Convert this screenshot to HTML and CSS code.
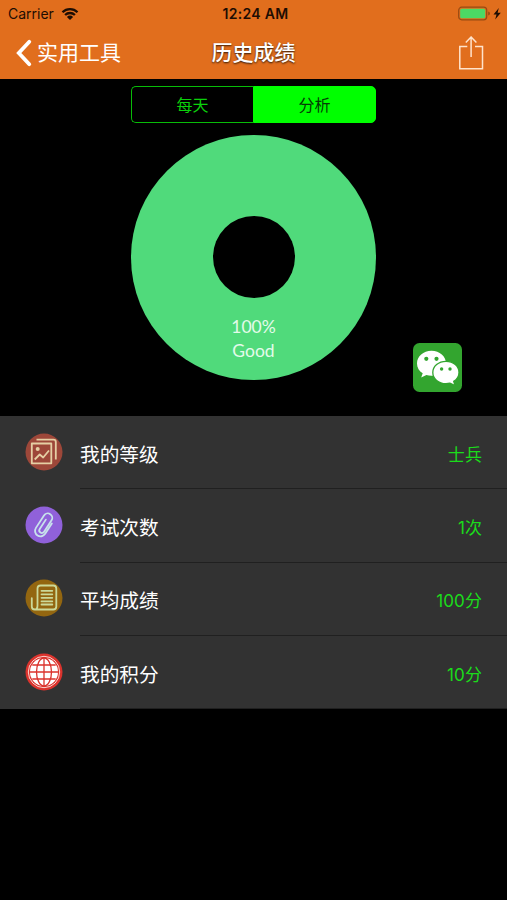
FILE: index.html
```html
<!DOCTYPE html>
<html lang="zh-CN">
<head>
<meta charset="utf-8">
<title>历史成绩</title>
<link rel="stylesheet" href="styles.css">
</head>
<body>

<div class="header">
<div class="status">
<div class="carrier">
<span>Carrier</span>
<svg width="18" height="14" viewBox="0 0 18 14">
<path d="M1.500 5.200a10.600 10.600 0 0 1 15 0M4.100 8a7 7 0 0 1 9.800 0" fill="none" stroke="#1d0d03" stroke-width="2.300"/>
<path d="M5.900 9.900a4.400 4.400 0 0 1 6.200 0L9 13z" fill="#1d0d03"/>
</svg>
</div>
<div class="clock">12:24 AM</div>
<div class="power">
<svg width="45" height="16" viewBox="0 0 45 16">
<rect x="0.700" y="1.200" width="28" height="12.600" rx="3" fill="none" stroke="#974b13" stroke-width="1.200"/>
<rect x="2.200" y="2.700" width="25" height="9.600" rx="1.500" fill="#4cd964"/>
<path d="M30.200 5.500v4q1.800-.6 1.800-2t-1.800-2z" fill="#974b13"/>
<path d="M40.800 2L35.500 8.500h3l-1.300 5 5.600-6.800h-3.200z" fill="#1d0d03"/>
</svg>
</div>
</div>
<div class="nav">
<a class="back" href="#">
<svg width="16" height="28" viewBox="0 0 16 28">
<path d="M13.300 2.800L2.800 14l10.500 11.200" fill="none" stroke="#fff" stroke-width="3.800" stroke-linecap="round"/>
</svg>
<span>实用工具</span>
</a>
<div class="title">历史成绩</div>
<a class="share" href="#">
<svg width="26" height="35" viewBox="0 0 26 35">
<path d="M9.300 10.500H1.800v22.200h22.700V10.500H17M13.100 21V1.300M7.800 6.500l5.300-5.500L18.400 6.500" fill="none" stroke="#ffe3cc" stroke-width="1.500"/>
</svg>
</a>
</div>
</div>

<div class="analysis">
<div class="tabs">
<a class="tab" href="#">每天</a>
<a class="tab active" href="#">分析</a>
</div>
<div class="chart">
<div class="hole"></div>
<div class="label">100%<br>Good</div>
</div>
<a class="wechat" href="#">
<svg width="49" height="49" viewBox="0 0 49 49">
<rect width="49" height="49" rx="6.500" fill="#33a52f"/>
<path d="M18.500 7.800C10.300 7.800 4 13.400 4 20.400c0 4.200 2.200 7.600 5.700 9.900l-1.500 4.200 5.200-2.500q2.400.8 5.100.8C26.700 32.800 33 27.400 33 20.400S26.700 7.800 18.500 7.800z" fill="#fff"/>
<path d="M33 18.300c-7.400 0-13.200 4.900-13.200 11.200S25.600 40.700 33 40.700q2 0 4-.5l5 2.400-1.300-4.200c3.200-2 5.300-5.200 5.300-8.900 0-6.300-5.600-11.200-13-11.200z" fill="#fff" stroke="#33a52f" stroke-width="1.300"/>
<circle cx="13.300" cy="15.800" r="2.100" fill="#33a52f"/>
<circle cx="23.500" cy="15.800" r="2.100" fill="#33a52f"/>
<circle cx="28.600" cy="26" r="1.700" fill="#33a52f"/>
<circle cx="37" cy="26" r="1.700" fill="#33a52f"/>
</svg>
</a>
</div>

<div class="list">
<div class="row">
<svg class="icon" viewBox="0 0 38 38">
<circle cx="19" cy="19" r="18.500" fill="#9d4739"/>
<g fill="none" stroke="#e5cfa4" stroke-width="1.800" stroke-linejoin="round">
<path d="M6.800 10.500h19.500v19.800H6.800z"/>
<path d="M11.500 6.600h17q2.300 0 2.300 2.300v17.600"/>
<path d="M9.700 26.500l5-5 3.500 3 5.800-7"/>
</g>
<circle cx="12.700" cy="16" r="2" fill="#e5cfa4"/>
</svg>
<div class="cell"><span>我的等级</span><span class="value">士兵</span></div>
</div>
<div class="row">
<svg class="icon" viewBox="0 0 38 38">
<circle cx="19" cy="19" r="18.500" fill="#9061da"/>
<path transform="rotate(33 19 19)" d="M24.800 13.500v12.300a5.500 5.500 0 0 1-11 0V11a4.500 4.500 0 0 1 9 0v13.700a2.600 2.600 0 0 1-5.200 0V13.500" fill="none" stroke="#c8e2ec" stroke-width="1.800" stroke-linecap="round"/>
</svg>
<div class="cell"><span>考试次数</span><span class="value">1次</span></div>
</div>
<div class="row">
<svg class="icon" viewBox="0 0 38 38">
<circle cx="19" cy="19" r="18.500" fill="#936610"/>
<g fill="none" stroke="#cbd99a" stroke-width="1.800" stroke-linecap="round" stroke-linejoin="round">
<path d="M12.500 26.500V9.500q0-3 3-3h12.800q3 0 3 3v18q0 3-3 3H9.800q-3 0-3-3v-8.300M12.500 26.500q0 4-2.700 4"/>
<path d="M16.500 11.800h10.800M16.500 15.300h10.800M16.500 18.800h10.800M16.500 22.300h10.800M16.500 25.500h10.800"/>
</g>
</svg>
<div class="cell"><span>平均成绩</span><span class="value">100分</span></div>
</div>
<div class="row">
<svg class="icon" viewBox="0 0 38 38">
<circle cx="19" cy="19" r="18.500" fill="#db332d"/>
<circle cx="19" cy="19" r="15.700" fill="none" stroke="#fbd5d0" stroke-width="1"/>
<circle cx="19" cy="19" r="14" fill="#fff"/>
<g fill="none" stroke="#db332d" stroke-width="1.300">
<path d="M19 5v28M5 19h28M7.300 12h23.400M7.300 26h23.400"/>
<ellipse cx="19" cy="19" rx="7.500" ry="14"/>
</g>
</svg>
<div class="cell"><span>我的积分</span><span class="value">10分</span></div>
</div>
</div>

</body>
</html>
```

FILE: styles.css
```css
body {
	font-family: Inter, "Noto Sans CJK SC", sans-serif;
	background: #000;
	color: #fff;
	margin: 0;
	padding: 0;
}
a {
	color: inherit;
	text-decoration: none;
}
svg {
	display: block;
}
.header {
	height: 79px;
	background: #e16e1d;
}
.status {
	display: grid;
	grid-template-columns: 1fr auto 1fr;
	align-items: center;
	height: 27px;
	padding: 0 4px 0 8px;
	color: #1d0d03;
	font-size: 14px;
	line-height: 27px;
}
.carrier {
	display: flex;
	align-items: center;
	gap: 7px;
}
.clock {
	font-weight: 600;
	font-size: 14px;
	letter-spacing: 0.3px;
}
.power {
	justify-self: end;
}
.nav {
	display: grid;
	grid-template-columns: 1fr auto 1fr;
	align-items: center;
	height: 52px;
	padding: 0 23px 0 16px;
}
.back {
	display: flex;
	align-items: center;
	gap: 5px;
	font-size: 21px;
	line-height: 30px;
}
.title {
	margin-left: 7px;
	font-size: 21px;
	font-weight: 500;
	line-height: 30px;
	text-shadow: 0 1px 2px rgba(0, 0, 0, 0.8);
}
.share {
	justify-self: end;
}
.analysis {
	position: relative;
	height: 330px;
	padding-top: 7px;
}
.tabs {
	display: flex;
	width: 245px;
	height: 37px;
	margin: 0 auto;
}
.tab {
	flex: 1;
	box-sizing: border-box;
	border: 1.5px solid #08bc08;
	border-right: 0;
	border-radius: 5px 0 0 5px;
	color: #0bd00b;
	font-size: 16px;
	line-height: 36px;
	text-align: center;
}
.tab.active {
	border: 1px solid #0f0;
	border-radius: 0 5px 5px 0;
	background: #0f0;
	color: #053b05;
}
.chart {
	box-sizing: border-box;
	width: 245px;
	height: 245px;
	margin: 12px auto 0;
	padding-top: 81px;
	border-radius: 50%;
	background: #50da7b;
}
.hole {
	width: 82px;
	height: 82px;
	margin: 0 auto;
	border-radius: 50%;
	background: #000;
}
.label {
	margin-top: 17px;
	font-family: Lato, sans-serif;
	font-size: 17.5px;
	line-height: 24px;
	text-align: center;
	color: #e3fbea;
}
.wechat {
	position: absolute;
	right: 45px;
	bottom: 24px;
}
.list {
	background: #323232;
}
.row {
	display: flex;
	align-items: center;
	height: 73.3px;
	padding-left: 25px;
}
.icon {
	width: 38px;
	height: 38px;
	margin: 0 17px 2px 0;
}
.cell {
	display: flex;
	flex: 1;
	align-items: center;
	justify-content: space-between;
	box-sizing: border-box;
	height: 100%;
	padding: 2px 25px 0 0;
	border-bottom: 1px solid #202020;
	font-size: 19.7px;
}
.value {
	color: #1bdc1b;
	font-size: 17px;
	letter-spacing: 0.1px;
}
```
